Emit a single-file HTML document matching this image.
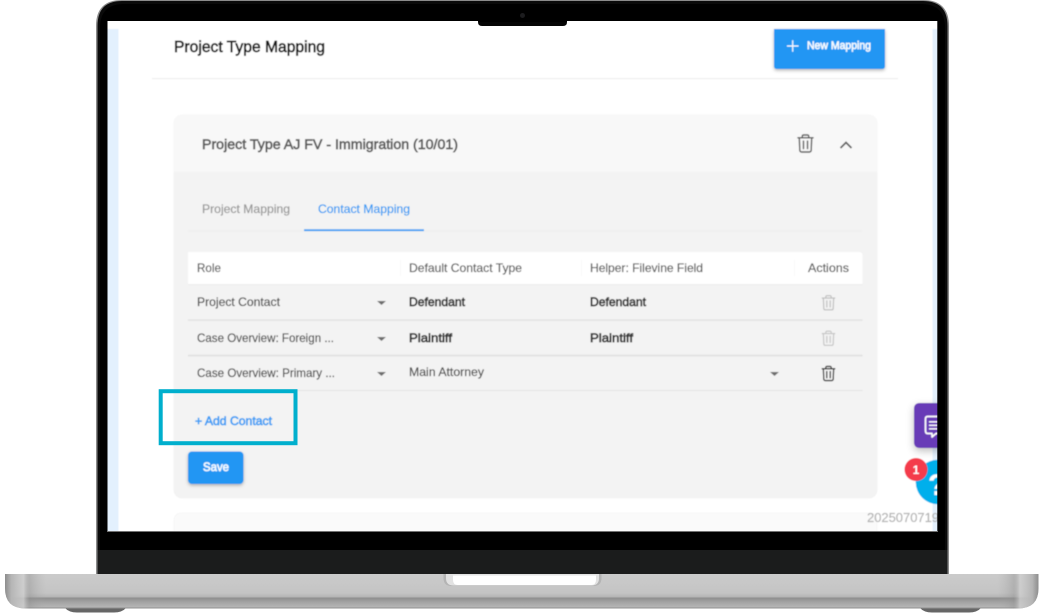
<!DOCTYPE html>
<html><head><meta charset="utf-8"><style>
html,body{margin:0;padding:0;background:#fff;width:1042px;height:613px;overflow:hidden}
svg{display:block}
text{font-family:"Liberation Sans",sans-serif}
.r{stroke-width:.2px}
.m{stroke-width:.65px}
</style></head><body>
<svg width="1042" height="613" viewBox="0 0 1042 613" xmlns="http://www.w3.org/2000/svg">
<defs>
<clipPath id="scr"><rect x="107.500" y="21" width="829.800" height="510.500"/></clipPath>
<linearGradient id="bv" x1="0" y1="0" x2="0" y2="1">
<stop offset="0" stop-color="#cbcbcb"/><stop offset=".55" stop-color="#c4c4c4"/><stop offset=".66" stop-color="#b5b5b5"/><stop offset=".7" stop-color="#8f8f8f"/><stop offset=".82" stop-color="#a4a4a4"/><stop offset=".95" stop-color="#b4b4b4"/><stop offset="1" stop-color="#8a8a8a"/>
</linearGradient>
<linearGradient id="bl" x1="0" y1="0" x2="1" y2="0">
<stop offset="0" stop-color="#8d8d8d"/><stop offset=".006" stop-color="#b5b5b5"/><stop offset=".018" stop-color="#cfcfcf" stop-opacity=".8"/><stop offset=".024" stop-color="#8f8f8f" stop-opacity=".4"/><stop offset=".04" stop-color="#aaa" stop-opacity="0"/><stop offset=".96" stop-color="#aaa" stop-opacity="0"/><stop offset=".976" stop-color="#8f8f8f" stop-opacity=".4"/><stop offset=".982" stop-color="#cfcfcf" stop-opacity=".8"/><stop offset=".994" stop-color="#b5b5b5"/><stop offset="1" stop-color="#8d8d8d"/>
</linearGradient>
<filter id="sh" x="-20%" y="-20%" width="140%" height="150%"><feDropShadow dx="0" dy="1.500" stdDeviation="1.500" flood-color="#000" flood-opacity=".28"/></filter>
<filter id="sh2" x="-30%" y="-30%" width="160%" height="170%"><feDropShadow dx="0" dy="3" stdDeviation="4" flood-color="#000" flood-opacity=".25"/></filter>
<filter id="bl1" filterUnits="userSpaceOnUse" x="100" y="15" width="845" height="525"><feGaussianBlur stdDeviation=".4"/></filter>
<g id="tr"><path d="M-5.600-4.200H5.600M-2.400-4.300V-5.200Q-2.400-6.300-1.300-6.300H1.300Q2.400-6.300 2.400-5.200V-4.300M-4.600-4L-4.200 5Q-4.100 6.300-2.900 6.300H2.900Q4.100 6.300 4.200 5L4.600-4M-1.500-1.800V3.800M1.500-1.800V3.800" fill="none" stroke-linejoin="round" stroke-linecap="round"/></g>
<path id="ar" d="M0 0H9L4.500 4Z" fill="#6e6e6e"/>
</defs>

<!-- lid -->
<path d="M96 574V26Q96 0 122 0H923Q949 0 949 26V574Z" fill="#8b8b8b"/>
<path d="M97.500 574V26Q97.500 1 122 1H923Q947.500 1 947.500 26V574Z" fill="#0a0a0a"/>
<path d="M100 550V28Q100 4 124 4H921Q945 4 945 28V550Z" fill="#000"/>
<rect x="97.500" y="550" width="850" height="24" fill="#1b1c1c"/>

<!-- screen -->
<g clip-path="url(#scr)">
<g filter="url(#bl1)">
<rect x="100" y="15" width="845" height="525" fill="#fff"/>
<rect x="100" y="29" width="18.500" height="510" fill="#e3f0fd"/>
<rect x="932.500" y="29" width="12" height="510" fill="#e3f0fd"/>

<text x="174" y="52" font-size="16" fill="#1e1e1e" class="m" stroke="#1e1e1e" textLength="151" lengthAdjust="spacingAndGlyphs">Project Type Mapping</text>
<rect x="152" y="78" width="746" height="1.200" fill="#eeeeee"/>

<path d="M774 29H885V66Q885 69 882 69H777Q774 69 774 66Z" fill="#2196f3" filter="url(#sh)"/>
<path d="M787 46H798.500M792.700 40.300V51.700" stroke="#fff" stroke-width="1.200" fill="none"/>
<text x="807" y="49" font-size="11" class="m" stroke="#f4faff" fill="#f4faff" textLength="64" lengthAdjust="spacingAndGlyphs">New Mapping</text>

<!-- card -->
<rect x="174" y="115" width="703" height="383" rx="8" fill="#f3f3f3" stroke="#f0f0f0" stroke-width=".6"/>
<path d="M174 172V123Q174 115 182 115H869Q877 115 877 123V172Z" fill="#f8f8f8"/>
<text x="202" y="149" font-size="14" class="m" stroke="#5e5e5e" fill="#5e5e5e" textLength="256" lengthAdjust="spacingAndGlyphs">Project Type AJ FV - Immigration (10/01)</text>
<g transform="translate(805.500 143.500) scale(1.350)"><use href="#tr" stroke="#5a5a5a" stroke-width="1.050"/></g>
<path d="M840.500 148L846 142.500L851.500 148" fill="none" stroke="#5f5f5f" stroke-width="1.800"/>

<!-- tabs -->
<text x="202" y="213" font-size="12" fill="#989898" class="r" stroke="#989898" textLength="88" lengthAdjust="spacingAndGlyphs">Project Mapping</text>
<text x="318" y="213" font-size="12" fill="#2f9bf4" class="r" stroke="#2f9bf4" textLength="92" lengthAdjust="spacingAndGlyphs">Contact Mapping</text>
<rect x="188" y="230.500" width="674" height="1" fill="#eeeeee"/>
<rect x="304" y="229.300" width="120" height="1.800" fill="#2f9bf4"/>

<!-- table -->
<path d="M188 284V252H859Q862.500 252 862.500 255.500V284Z" fill="#fff"/>
<rect x="400" y="260" width="1" height="16" fill="#f8f8f8"/>
<rect x="581" y="260" width="1" height="16" fill="#f8f8f8"/>
<rect x="794" y="260" width="1" height="16" fill="#f8f8f8"/>
<rect x="188" y="284" width="674.500" height="1" fill="#ececec"/>
<g class="r" stroke="#5c5c5c" fill="#5c5c5c" font-size="12">
<text x="197" y="272" textLength="24" lengthAdjust="spacingAndGlyphs">Role</text>
<text x="409" y="272" textLength="113" lengthAdjust="spacingAndGlyphs">Default Contact Type</text>
<text x="590" y="272" textLength="113" lengthAdjust="spacingAndGlyphs">Helper: Filevine Field</text>
<text x="808" y="272" textLength="41" lengthAdjust="spacingAndGlyphs">Actions</text>
</g>

<rect x="188" y="319.500" width="674.500" height="1.200" fill="#dedede"/>
<rect x="188" y="354.800" width="674.500" height="1.500" fill="#dedede"/>
<rect x="188" y="390" width="674.500" height="1" fill="#e4e4e4"/>

<g class="r" stroke="#4f4f4f" fill="#4f4f4f" font-size="12">
<text x="197" y="306" textLength="83" lengthAdjust="spacingAndGlyphs">Project Contact</text>
<text x="197" y="342" textLength="137" lengthAdjust="spacingAndGlyphs">Case Overview: Foreign ...</text>
<text x="197" y="377" textLength="138" lengthAdjust="spacingAndGlyphs">Case Overview: Primary ...</text>
<text x="409" y="376" textLength="75" lengthAdjust="spacingAndGlyphs">Main Attorney</text>
</g>
<use href="#ar" x="377" y="301"/><use href="#ar" x="377" y="337"/><use href="#ar" x="377" y="372"/><use href="#ar" x="770" y="372"/>

<g class="m" stroke="#333" fill="#333" font-size="12">
<text x="409" y="306" textLength="56" lengthAdjust="spacingAndGlyphs">Defendant</text>
<text x="409" y="342" textLength="43" lengthAdjust="spacingAndGlyphs">Plaintiff</text>
<text x="590" y="306" textLength="56" lengthAdjust="spacingAndGlyphs">Defendant</text>
<text x="590" y="342" textLength="43" lengthAdjust="spacingAndGlyphs">Plaintiff</text>
</g>

<g transform="translate(828.500 302.800) scale(1.120)"><use href="#tr" stroke="#bdbdbd" stroke-width="1"/></g>
<g transform="translate(828.500 338.300) scale(1.120)"><use href="#tr" stroke="#c4c4c4" stroke-width="1"/></g>
<g transform="translate(828.500 373.500) scale(1.120)"><use href="#tr" stroke="#333" stroke-width="1.150"/></g>

<!-- add contact -->
<text x="195" y="425" font-size="12" class="m" stroke="#3f9ff5" fill="#3f9ff5" textLength="77" lengthAdjust="spacingAndGlyphs">+ Add Contact</text>

<rect x="188" y="451.500" width="55.500" height="32.500" rx="4" fill="#2196f3" filter="url(#sh)"/>
<text x="203" y="471" font-size="12" class="m" stroke="#f4faff" fill="#f4faff" textLength="26" lengthAdjust="spacingAndGlyphs">Save</text>

<!-- next card -->
<path d="M174 540V521Q174 513 182 513H869Q877 513 877 521V540Z" fill="#fafafa" stroke="#f2f2f2" stroke-width=".6"/>

<!-- widgets -->
<path d="M945 403H920Q914 403 914 409V442Q914 448 920 448H945Z" fill="#673ab7" filter="url(#sh2)"/>
<path d="M927.500 416.500H942Q945 416.500 945 419.500V430.500Q945 433.500 942 433.500H936L932 437V433.500H927.500Q925.500 433.500 925.500 430.500V419Q925.500 416.500 927.500 416.500Z" fill="none" stroke="#fff" stroke-width="1.700" stroke-linejoin="round"/>
<path d="M929 421.800H942M929 425.300H942M929 428.800H938" stroke="#fff" stroke-width="1.400"/>
<circle cx="938" cy="482" r="22.300" fill="#00afec"/>
<text x="928" y="495" font-size="30" font-weight="700" fill="#fff">?</text>
<circle cx="916" cy="469.500" r="11.500" fill="#f43a4b"/>
<text x="916" y="474" font-size="12" font-weight="700" fill="#fff" text-anchor="middle">1</text>
<text x="867" y="522" font-size="13" fill="#b4b4b4" class="r" stroke="#b4b4b4" textLength="72" lengthAdjust="spacingAndGlyphs">2025070719</text>
</g>
</g>
<rect x="107" y="531" width="831" height=".8" fill="#8f8f8f"/>

<!-- highlight box -->
<rect x="160.700" y="391.200" width="134.800" height="52" fill="none" stroke="#00afcd" stroke-width="4"/>

<!-- notch -->
<path d="M478 20V22Q478 26 482 26H563Q567 26 567 22V20Z" fill="#050505"/>
<rect x="478" y="4" width="89" height="18" fill="#000"/>
<circle cx="522.500" cy="15.500" r="2.500" fill="#1c1c1e"/>

<!-- feet -->
<path d="M65 608H126Q122 612.500 114 612.500H77Q69 612.500 65 608Z" fill="#666"/>
<path d="M920 608H981Q977 612.500 969 612.500H932Q924 612.500 920 608Z" fill="#666"/>

<!-- base -->
<path d="M5 574H1038.500V588Q1038.500 608.500 1018 608.500H25.500Q5 608.500 5 588Z" fill="url(#bv)"/>
<path d="M5 574H1038.500V588Q1038.500 608.500 1018 608.500H25.500Q5 608.500 5 588Z" fill="url(#bl)"/>
<path d="M443.500 574H601.500V578Q601.500 586 593.500 586H451.500Q443.500 586 443.500 578Z" fill="#b4b4b4"/>
<path d="M446 574H599V578Q599 585.500 591.500 585.500H453.500Q446 585.500 446 578Z" fill="#e2e2e2"/>
<path d="M453 575.500H596V580Q596 585 591 585H458Q453 585 453 580Z" fill="#ffffff"/>
</svg>
</body></html>
